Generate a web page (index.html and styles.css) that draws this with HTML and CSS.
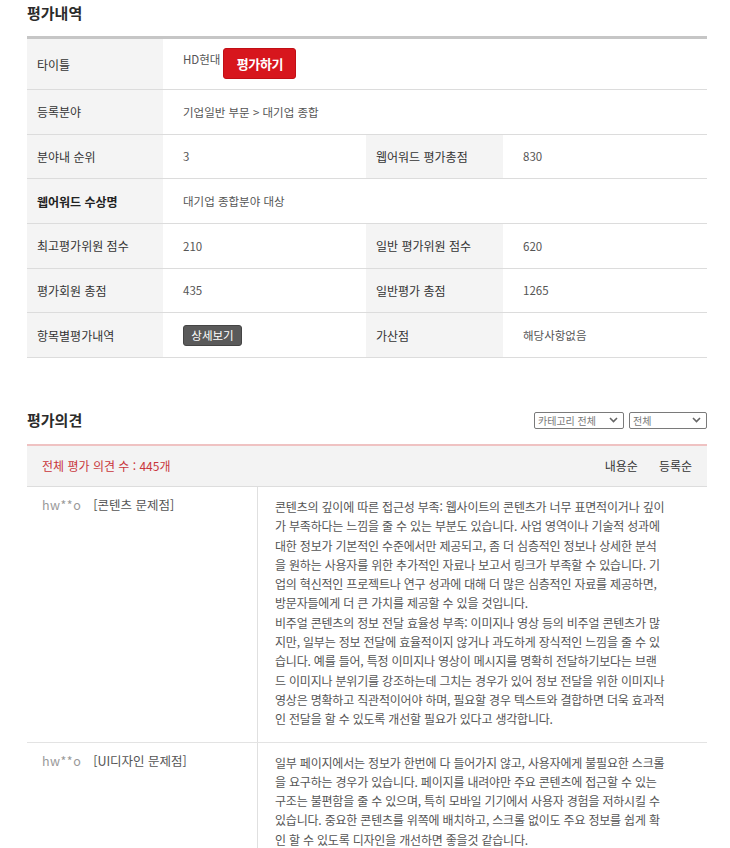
FILE: index.html
```html
<!DOCTYPE html>
<html lang="ko">
<head>
<meta charset="utf-8">
<title>평가내역</title>
<link rel="stylesheet" href="styles.css">
</head>
<body>
<div class="page">
  <section class="section">
    <h2 class="sec-title first">평가내역</h2>
    <div class="info-grid">
      <div class="cell label row-first">타이틀</div>
      <div class="cell value span3 row-first title-cell"><span class="company">HD현대</span><a class="btn-eval">평가하기</a></div>

      <div class="cell label">등록분야</div>
      <div class="cell value span3">기업일반 부문 &gt; 대기업 종합</div>

      <div class="cell label">분야내 순위</div>
      <div class="cell value">3</div>
      <div class="cell label">웹어워드 평가총점</div>
      <div class="cell value">830</div>

      <div class="cell label strong">웹어워드 수상명</div>
      <div class="cell value span3">대기업 종합분야 대상</div>

      <div class="cell label">최고평가위원 점수</div>
      <div class="cell value">210</div>
      <div class="cell label">일반 평가위원 점수</div>
      <div class="cell value">620</div>

      <div class="cell label">평가회원 총점</div>
      <div class="cell value">435</div>
      <div class="cell label">일반평가 총점</div>
      <div class="cell value">1265</div>

      <div class="cell label">항목별평가내역</div>
      <div class="cell value"><a class="btn-detail">상세보기</a></div>
      <div class="cell label">가산점</div>
      <div class="cell value">해당사항없음</div>
    </div>
  </section>

  <section class="section opinions">
    <div class="op-head">
      <h2 class="sec-title">평가의견</h2>
      <div class="filters">
        <div class="select sel-cat"><span>카테고리 전체</span><svg class="chev" width="9" height="6" viewBox="0 0 9 6"><path d="M1 1 L4.5 4.5 L8 1" fill="none" stroke="#666" stroke-width="1.6"/></svg></div>
        <div class="select sel-all"><span>전체</span><svg class="chev" width="9" height="6" viewBox="0 0 9 6"><path d="M1 1 L4.5 4.5 L8 1" fill="none" stroke="#666" stroke-width="1.6"/></svg></div>
      </div>
    </div>
    <div class="summary">
      <span class="count">전체 평가 의견 수 : 445개</span>
      <div class="sorts"><a>내용순</a><a>등록순</a></div>
    </div>

    <div class="comment">
      <div class="c-meta"><span class="c-user">hw**o</span><span class="c-cat">[콘텐츠 문제점]</span></div>
      <p class="c-text">콘텐츠의 깊이에 따른 접근성 부족: 웹사이트의 콘텐츠가 너무 표면적이거나 깊이<br>가 부족하다는 느낌을 줄 수 있는 부분도 있습니다. 사업 영역이나 기술적 성과에<br>대한 정보가 기본적인 수준에서만 제공되고, 좀 더 심층적인 정보나 상세한 분석<br>을 원하는 사용자를 위한 추가적인 자료나 보고서 링크가 부족할 수 있습니다. 기<br>업의 혁신적인 프로젝트나 연구 성과에 대해 더 많은 심층적인 자료를 제공하면,<br>방문자들에게 더 큰 가치를 제공할 수 있을 것입니다.<br>비주얼 콘텐츠의 정보 전달 효율성 부족: 이미지나 영상 등의 비주얼 콘텐츠가 많<br>지만, 일부는 정보 전달에 효율적이지 않거나 과도하게 장식적인 느낌을 줄 수 있<br>습니다. 예를 들어, 특정 이미지나 영상이 메시지를 명확히 전달하기보다는 브랜<br>드 이미지나 분위기를 강조하는데 그치는 경우가 있어 정보 전달을 위한 이미지나<br>영상은 명확하고 직관적이어야 하며, 필요할 경우 텍스트와 결합하면 더욱 효과적<br>인 전달을 할 수 있도록 개선할 필요가 있다고 생각합니다.</p>
    </div>

    <div class="comment">
      <div class="c-meta"><span class="c-user">hw**o</span><span class="c-cat">[UI디자인 문제점]</span></div>
      <p class="c-text">일부 페이지에서는 정보가 한번에 다 들어가지 않고, 사용자에게 불필요한 스크롤<br>을 요구하는 경우가 있습니다. 페이지를 내려야만 주요 콘텐츠에 접근할 수 있는<br>구조는 불편함을 줄 수 있으며, 특히 모바일 기기에서 사용자 경험을 저하시킬 수<br>있습니다. 중요한 콘텐츠를 위쪽에 배치하고, 스크롤 없이도 주요 정보를 쉽게 확<br>인 할 수 있도록 디자인을 개선하면 좋을것 같습니다.</p>
    </div>
  </section>
</div>
</body>
</html>
```

FILE: styles.css
```css
* { box-sizing: border-box; }
html, body { margin: 0; padding: 0; background: #fff; }
body {
  font-family: "Noto Sans CJK KR", "Noto Sans", sans-serif;
  color: #333;
  font-size: 12px;
}
.page { padding: 2px 23px 0 27px; width: 730px; }

.sec-title {
  margin: 0;
  font-size: 15px;
  line-height: 22px;
  font-weight: 700;
  color: #2b2b2b;
}

.info-grid {
  margin-top: 12px;
  display: grid;
  grid-template-columns: 136px 203px 137px 204px;
  border-top: 3px solid #c6c6c6;
}
.cell {
  height: 44.67px;
  display: flex;
  align-items: center;
  border-bottom: 1px solid #dcdcdc;
}
.cell.row-first { height: 51px; }
.label {
  background: #f4f4f4;
  padding-left: 10px;
  font-size: 12px;
  color: #333;
}
.label.strong { font-weight: 700; color: #222; }
.value {
  padding-left: 20px;
  font-size: 11.5px;
  color: #555;
}
.span3 { grid-column: span 3; }

.title-cell { align-items: flex-start; padding-top: 9px; }
.company { padding-top: 3px; margin-right: 3px; }
.btn-eval {
  display: inline-flex;
  align-items: center;
  justify-content: center;
  width: 73px;
  height: 31px;
  background: #d7161d;
  border: 1px solid #c10f15;
  border-radius: 3px;
  color: #fff;
  font-weight: 700;
  font-size: 13px;
  letter-spacing: -0.3px;
}
.btn-detail {
  display: inline-flex;
  align-items: center;
  justify-content: center;
  width: 59px;
  height: 21px;
  background: #5a5a5a;
  border: 1px solid #444;
  border-radius: 3px;
  color: #fff;
  font-size: 11.5px;
}

.opinions { margin-top: 51px; }
.op-head {
  display: flex;
  justify-content: space-between;
  align-items: flex-start;
  padding-bottom: 13px;
  border-bottom: 2px solid #efc2c2;
}
.filters { display: flex; gap: 5px; margin-top: 3px; }
.select {
  display: flex;
  align-items: center;
  justify-content: space-between;
  height: 17px;
  border: 1px solid #7a7a7a;
  border-radius: 2px;
  padding: 0 5px 0 3px;
  font-size: 10px;
  color: #777;
  background: #fff;
}
.sel-cat { width: 90px; }
.sel-all { width: 78px; }
.chev { display: block; }

.summary {
  height: 41px;
  background: #f3f3f3;
  border-bottom: 1px solid #dddddd;
  display: flex;
  align-items: center;
  justify-content: space-between;
  padding: 0 15px;
}
.count { color: #c9363b; font-size: 12px; }
.sorts { display: flex; gap: 21px; font-size: 12px; color: #333; }

.comment {
  display: grid;
  grid-template-columns: 230px 1fr;
  border-bottom: 1px solid #e3e3e3;
}
.c-meta {
  padding: 8px 0 0 15px;
  font-size: 12.5px;
  line-height: 19.3px;
  display: flex;
  gap: 12px;
}
.c-user { color: #9a9a9a; letter-spacing: 0.5px; }
.c-cat { color: #555; }
.c-text {
  margin: 0;
  border-left: 1px solid #e0e0e0;
  padding: 10px 10px 13px 17px;
  font-size: 12px;
  letter-spacing: -0.2px;
  line-height: 19.3px;
  color: #555;
  white-space: nowrap;
}
```
